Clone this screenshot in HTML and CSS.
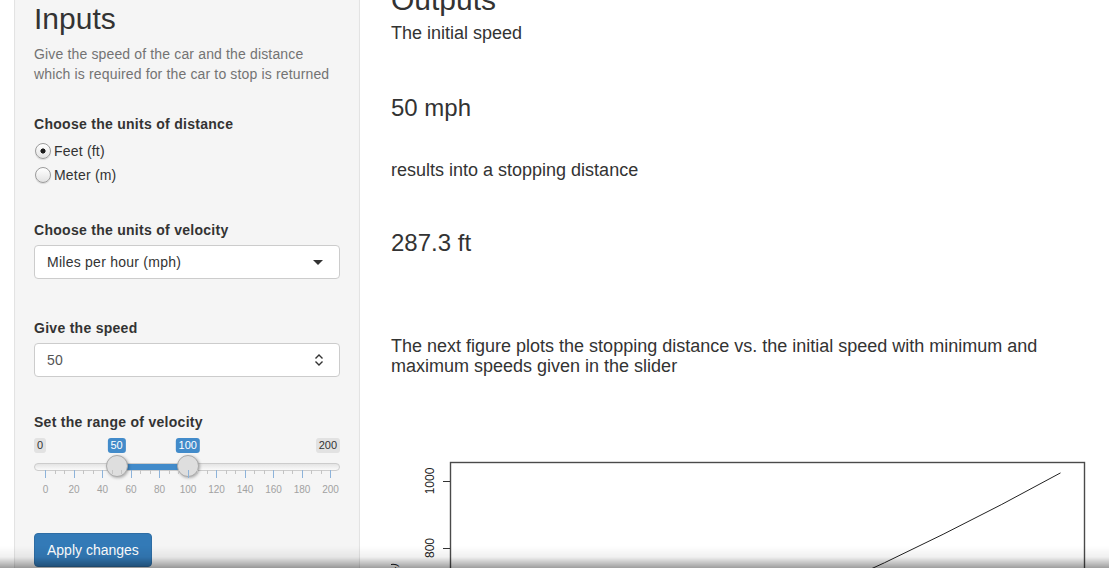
FILE: index.html
```html
<!DOCTYPE html>
<html>
<head>
<meta charset="utf-8">
<title>Stopping distance</title>
<link rel="stylesheet" href="styles.css">
</head>
<body>
<div class="page">
  <aside class="well">
    <h2 class="title">Inputs</h2>
    <p class="help">Give the speed of the car and the distance which is required for the car to stop is returned</p>

    <div class="group group-distance">
      <div class="control-label">Choose the units of distance</div>
      <label class="radio radio-first"><span class="radio-dot checked"></span>Feet (ft)</label>
      <label class="radio radio-next"><span class="radio-dot"></span>Meter (m)</label>
    </div>

    <div class="group group-velocity">
      <div class="control-label">Choose the units of velocity</div>
      <div class="select">
        <span>Miles per hour (mph)</span>
        <span class="caret"></span>
      </div>
    </div>

    <div class="group group-speed">
      <div class="control-label">Give the speed</div>
      <div class="number">
        <span>50</span>
        <svg class="spinner" width="10" height="14" viewBox="0 0 10 14">
          <path d="M1.5 5.5L5 2L8.5 5.5M1.5 8.5L5 12L8.5 8.5" fill="none" stroke="#333" stroke-width="1.4"/>
        </svg>
      </div>
    </div>

    <div class="group group-range">
      <div class="control-label">Set the range of velocity</div>
      <div class="irs">
        <span class="irs-min">0</span>
        <span class="irs-max">200</span>
        <span class="irs-from" style="left:82.5px">50</span>
        <span class="irs-to" style="left:153.7px">100</span>
        <div class="irs-line"></div>
        <div class="irs-bar" style="left:82.5px;width:71.2px"></div>
        <span class="irs-handle" style="left:82.5px"></span>
        <span class="irs-handle" style="left:153.7px"></span>
        <svg class="irs-grid" width="288" height="9" viewBox="0 0 288 9">
          <path class="minor" d="M10 0v4M19.5 0v4M38.5 0v4M48 0v4M67 0v4M76.5 0v4M95.5 0v4M105 0v4M124 0v4M133.5 0v4M152.5 0v4M162 0v4M181 0v4M190.5 0v4M209.5 0v4M219 0v4M238 0v4M247.5 0v4M266.5 0v4M276 0v4"/>
          <path class="major" d="M0.5 0v8M29 0v8M57.5 0v8M86 0v8M114.5 0v8M143 0v8M171.5 0v8M200 0v8M228.5 0v8M257 0v8M285.5 0v8"/>
        </svg>
        <div class="irs-grid-text">
          <span>0</span><span>20</span><span>40</span><span>60</span><span>80</span><span>100</span><span>120</span><span>140</span><span>160</span><span>180</span><span>200</span>
        </div>
      </div>
    </div>

    <button class="btn">Apply changes</button>
  </aside>

  <main class="main">
    <h2 class="title-out">Outputs</h2>
    <h4 class="out-initial">The initial speed</h4>
    <h3 class="out-speed">50 mph</h3>
    <h4 class="out-results">results into a stopping distance</h4>
    <h3 class="out-distance">287.3 ft</h3>
    <h4 class="out-figure">The next figure plots the stopping distance vs. the initial speed with minimum and maximum speeds given in the slider</h4>
    <svg class="plot" width="703" height="170" viewBox="0 0 703 170">
      <rect x="59.5" y="62.5" width="634" height="200" fill="none" stroke="#4a4a4a" stroke-width="1.4"/>
      <path d="M52 81.5H59M52 148.5H59" stroke="#333" stroke-width="1"/>
      <text class="axis-num" transform="translate(43,81) rotate(-90)" text-anchor="middle">1000</text>
      <text class="axis-num" transform="translate(43,148) rotate(-90)" text-anchor="middle">800</text>
      <text class="axis-title" transform="translate(5,163) rotate(-90)" text-anchor="end">Stopping distance (ft)</text>
      <polyline fill="none" stroke="#222" stroke-width="1" points="82.5,319.7 141.2,301.8 199.9,282.4 258.6,261.5 317.3,239.1 376,215.1 434.7,189.7 493.4,162.8 552.1,134.3 610.8,104.4 669.5,72.9"/>
    </svg>
  </main>
</div>
<div class="bottom-shade"></div>
</body>
</html>
```

FILE: styles.css
```css
html, body {
  margin: 0;
  padding: 0;
  overflow: hidden;
  background: #fff;
}

body {
  font-family: "Liberation Sans", Arial, Helvetica, sans-serif;
  font-size: 14px;
  line-height: 20px;
  color: #333;
}

.page {
  display: flex;
  align-items: flex-start;
  gap: 31px;
  padding: 0 15px 0 14px;
  margin-top: -38px;
}

/* ---------- sidebar ---------- */
.well {
  flex: none;
  width: 346px;
  box-sizing: border-box;
  padding: 19px 19px 40px;
  background: #f5f5f5;
  border: 1px solid #e3e3e3;
  border-radius: 4px;
  box-shadow: inset 0 1px 1px rgba(0, 0, 0, 0.05);
}

.title {
  margin: 20px 0 9px;
  font-size: 30px;
  font-weight: 400;
  line-height: 33px;
}

.help {
  margin: 0;
  color: #737373;
  line-height: 20px;
  letter-spacing: 0.15px;
}

.control-label {
  font-weight: 700;
  line-height: 20px;
  letter-spacing: 0.28px;
}

.group-distance { margin-top: 30px; }
.group-velocity { margin-top: 35px; }
.group-speed { margin-top: 39px; }
.group-range { margin-top: 35px; }

.radio {
  display: flex;
  align-items: center;
  gap: 3px;
  height: 20px;
  line-height: 20px;
  letter-spacing: 0.2px;
}
.radio-first { margin-top: 7px; }
.radio-next { margin-top: 4px; }

.radio-dot {
  flex: none;
  width: 14px;
  height: 14px;
  margin-left: 1px;
  border: 1px solid #9b9b9b;
  border-radius: 50%;
  background: linear-gradient(#ffffff, #e2e2e2);
  box-shadow: 0 1px 1px rgba(0, 0, 0, 0.12);
}
.radio-dot.checked {
  background: radial-gradient(circle, #1a1a1a 0, #1a1a1a 2.2px, rgba(255,255,255,0) 2.9px), linear-gradient(#ffffff, #e2e2e2);
}

.select,
.number {
  display: flex;
  align-items: center;
  justify-content: space-between;
  height: 34px;
  box-sizing: border-box;
  margin-top: 5px;
  padding: 0 15px 0 12px;
  background: #fff;
  border: 1px solid #cccccc;
  border-radius: 4px;
  letter-spacing: 0.25px;
}
.select { color: #333; }
.number { color: #555; padding-right: 15px; }

.caret {
  width: 0;
  height: 0;
  margin-right: 1px;
  border-style: solid;
  border-width: 5px 5px 0 5px;
  border-color: #333 transparent transparent transparent;
}

.spinner { display: block; }

/* ---------- range slider ---------- */
.irs {
  position: relative;
  height: 55px;
  margin-top: 6px;
  font-size: 11px;
}
.irs-min,
.irs-max,
.irs-from,
.irs-to {
  position: absolute;
  top: 0;
  padding: 1px 3px;
  line-height: 13px;
  border-radius: 3px;
}
.irs-min,
.irs-max {
  background: #e2e2e2;
  color: #333;
}
.irs-min { left: 0; }
.irs-max { right: 0; }
.irs-from,
.irs-to {
  background: #428bca;
  color: #fff;
  transform: translateX(-50%);
}

.irs-line {
  position: absolute;
  top: 25px;
  left: 0;
  right: 0;
  height: 6px;
  background: linear-gradient(#e4e4e4, #fafafa);
  border: 1px solid #cccccc;
  border-radius: 8px;
}
.irs-bar {
  position: absolute;
  top: 26px;
  height: 6px;
  background: #428bca;
}
.irs-handle {
  position: absolute;
  top: 17px;
  width: 20px;
  height: 20px;
  margin-left: -11px;
  border: 1px solid #ababab;
  border-radius: 50%;
  background: #dedede;
  box-shadow: 1px 1px 3px rgba(0, 0, 0, 0.3);
}

.irs-grid {
  position: absolute;
  top: 32px;
  left: 11px;
  shape-rendering: crispEdges;
}
.irs-grid .minor { stroke: #c4c4c4; stroke-width: 1; }
.irs-grid .major { stroke: #8db3da; stroke-width: 1; }

.irs-grid-text {
  position: absolute;
  top: 47px;
  left: 11.5px;
  width: 285px;
  display: flex;
  justify-content: space-between;
  font-size: 10px;
  line-height: 10px;
  color: #a2a2a2;
}
.irs-grid-text span {
  width: 0;
  display: flex;
  justify-content: center;
  white-space: nowrap;
}

.btn {
  display: block;
  margin-top: 40px;
  height: 34px;
  padding: 0 12px;
  font-family: inherit;
  font-size: 14px;
  line-height: 20px;
  color: #fff;
  background: #337ab7;
  border: 1px solid #2e6da4;
  border-radius: 4px;
}

/* ---------- main ---------- */
.main {
  flex: 1;
  min-width: 0;
}
.main h2,
.main h3,
.main h4 {
  font-weight: 400;
  margin-bottom: 0;
  line-height: 1.1;
}
.title-out {
  margin-top: 21px;
  font-size: 30px;
}
.out-initial,
.out-results,
.out-figure {
  font-size: 18px;
}
.out-speed,
.out-distance {
  font-size: 24px;
}
.out-initial { margin-top: 8px; }
.out-speed { margin-top: 51px; }
.out-results { margin-top: 40px; }
.out-distance { margin-top: 49px; }
.out-figure { margin-top: 81px; }

.plot {
  display: block;
  margin-top: 23px;
  overflow: hidden;
}
.axis-num,
.axis-title {
  font-family: "Liberation Sans", Arial, sans-serif;
  font-size: 12px;
  fill: #222;
}

.bottom-shade {
  position: fixed;
  left: 0;
  right: 0;
  bottom: 0;
  height: 22px;
  pointer-events: none;
  background: linear-gradient(rgba(0, 0, 0, 0), rgba(0, 0, 0, 0.06) 50%, rgba(0, 0, 0, 0.38));
}
```
